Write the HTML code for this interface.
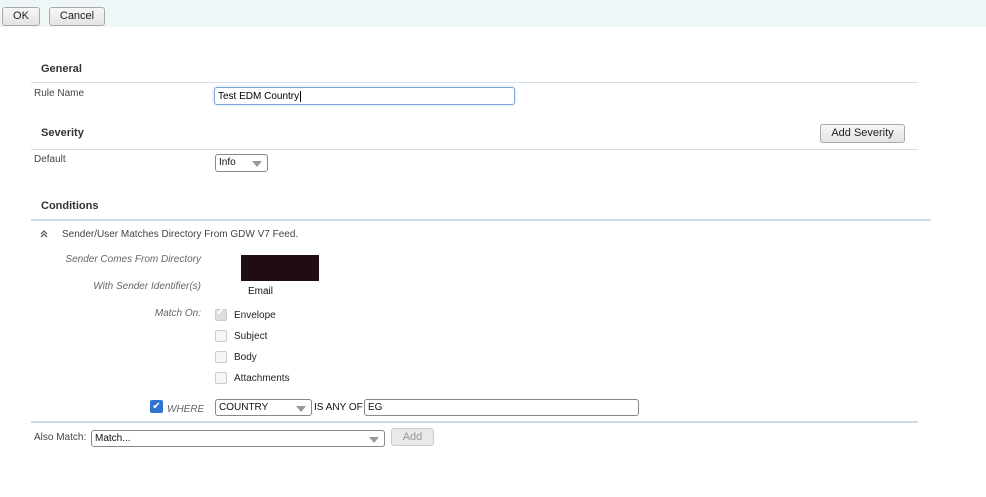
<!DOCTYPE html>
<html><head><style>
body{margin:0;width:986px;height:497px;background:#fff;font-family:"Liberation Sans",sans-serif;font-size:10px;color:#222;position:relative;overflow:hidden}
.a{position:absolute;white-space:nowrap}
.btn{position:absolute;border:1px solid #a9a9a9;border-radius:3px;background:linear-gradient(#f7f7f7,#e3e3e3);font-size:11px;text-align:center;box-sizing:border-box;color:#222}
.h{position:absolute;font-weight:bold;font-size:11px;color:#333}
.ln{position:absolute;height:1px;background:#d3dfe8}
.lab{position:absolute;font-size:10px;color:#444}
.it{position:absolute;font-style:italic;color:#666;font-size:10px;text-align:right}
.cb{position:absolute;width:12px;height:12px;border:1px solid #ccc;border-radius:2px;background:#f6f6f6;box-sizing:border-box}
.sel{position:absolute;border:1px solid #888;border-radius:3px;background:#fff;box-sizing:border-box;font-size:10px;padding:2px 0 0 3px;color:#111}
.sel:after{content:"";position:absolute;right:5px;top:6px;border-left:5px solid transparent;border-right:5px solid transparent;border-top:6px solid #999}
</style></head><body>
<div class="a" style="left:0;top:0;width:986px;height:27px;background:#eef6f8"></div>
<div class="btn" style="left:2px;top:7px;width:38px;height:19px;line-height:17px">OK</div>
<div class="btn" style="left:49px;top:7px;width:56px;height:19px;line-height:17px">Cancel</div>

<div class="h" style="left:41px;top:63px">General</div>
<div class="ln" style="left:31px;top:82px;width:887px"></div>
<div class="lab" style="left:34px;top:88px">Rule Name</div>
<div class="a" style="left:214px;top:87px;width:301px;height:18px;border:1px solid #7aa7d6;border-radius:3px;box-sizing:border-box;box-shadow:0 0 3px #bcd8f2;font-size:10px;padding:3px 0 0 3px;color:#000">Test EDM Country<span style="border-left:1px solid #000;margin-left:1px"></span></div>

<div class="h" style="left:41px;top:127px">Severity</div>
<div class="btn" style="left:820px;top:124px;width:85px;height:19px;line-height:17px">Add Severity</div>
<div class="ln" style="left:31px;top:149px;width:887px"></div>
<div class="lab" style="left:34px;top:154px">Default</div>
<div class="sel" style="left:215px;top:154px;width:53px;height:18px">Info</div>

<div class="h" style="left:41px;top:200px">Conditions</div>
<div class="ln" style="left:31px;top:219px;width:900px;height:2px;background:#cfdde8"></div>
<svg class="a" style="left:40px;top:230px" width="8" height="8" viewBox="0 0 8 8"><path d="M1 4L4 1L7 4M1 7L4 4L7 7" fill="none" stroke="#555" stroke-width="1.2"/></svg>
<div class="lab" style="left:62px;top:229px">Sender/User Matches Directory From GDW V7 Feed.</div>
<div class="it" style="left:40px;top:254px;width:161px">Sender Comes From Directory</div>
<div class="a" style="left:241px;top:255px;width:78px;height:26px;background:#1f0c14"></div>
<div class="it" style="left:40px;top:281px;width:161px">With Sender Identifier(s)</div>
<div class="a" style="left:248px;top:286px;font-size:10px;color:#111">Email</div>
<div class="it" style="left:40px;top:308px;width:161px">Match On:</div>
<div class="cb" style="left:215px;top:309px;background:#ddd"></div><div class="a" style="left:216px;top:307px;color:#fff;font-size:10px">✔</div>
<div class="lab" style="left:234px;top:310px;color:#222">Envelope</div>
<div class="cb" style="left:215px;top:330px"></div><div class="lab" style="left:234px;top:331px;color:#222">Subject</div>
<div class="cb" style="left:215px;top:351px"></div><div class="lab" style="left:234px;top:352px;color:#222">Body</div>
<div class="cb" style="left:215px;top:372px"></div><div class="lab" style="left:234px;top:373px;color:#222">Attachments</div>

<div class="a" style="left:150px;top:400px;width:13px;height:13px;background:#2f74d0;border-radius:2px;color:#fff;font-size:10px;line-height:13px;text-align:center">✔</div>
<div class="it" style="left:167px;top:404px;text-align:left">WHERE</div>
<div class="sel" style="left:215px;top:399px;width:97px;height:17px">COUNTRY</div>
<div class="a" style="left:314px;top:402px;font-size:10px;color:#111">IS ANY OF</div>
<div class="a" style="left:364px;top:399px;width:275px;height:17px;border:1px solid #888;border-radius:3px;box-sizing:border-box;font-size:10px;padding:2px 0 0 3px;color:#111">EG</div>
<div class="ln" style="left:31px;top:421px;width:887px;height:2px;background:#cfdde8"></div>
<div class="lab" style="left:34px;top:432px">Also Match:</div>
<div class="sel" style="left:91px;top:430px;width:294px;height:17px">Match...</div>
<div class="btn" style="left:391px;top:428px;width:43px;height:18px;line-height:16px;color:#999;border-color:#ccc;background:#e9e9e9">Add</div>
</body></html>
